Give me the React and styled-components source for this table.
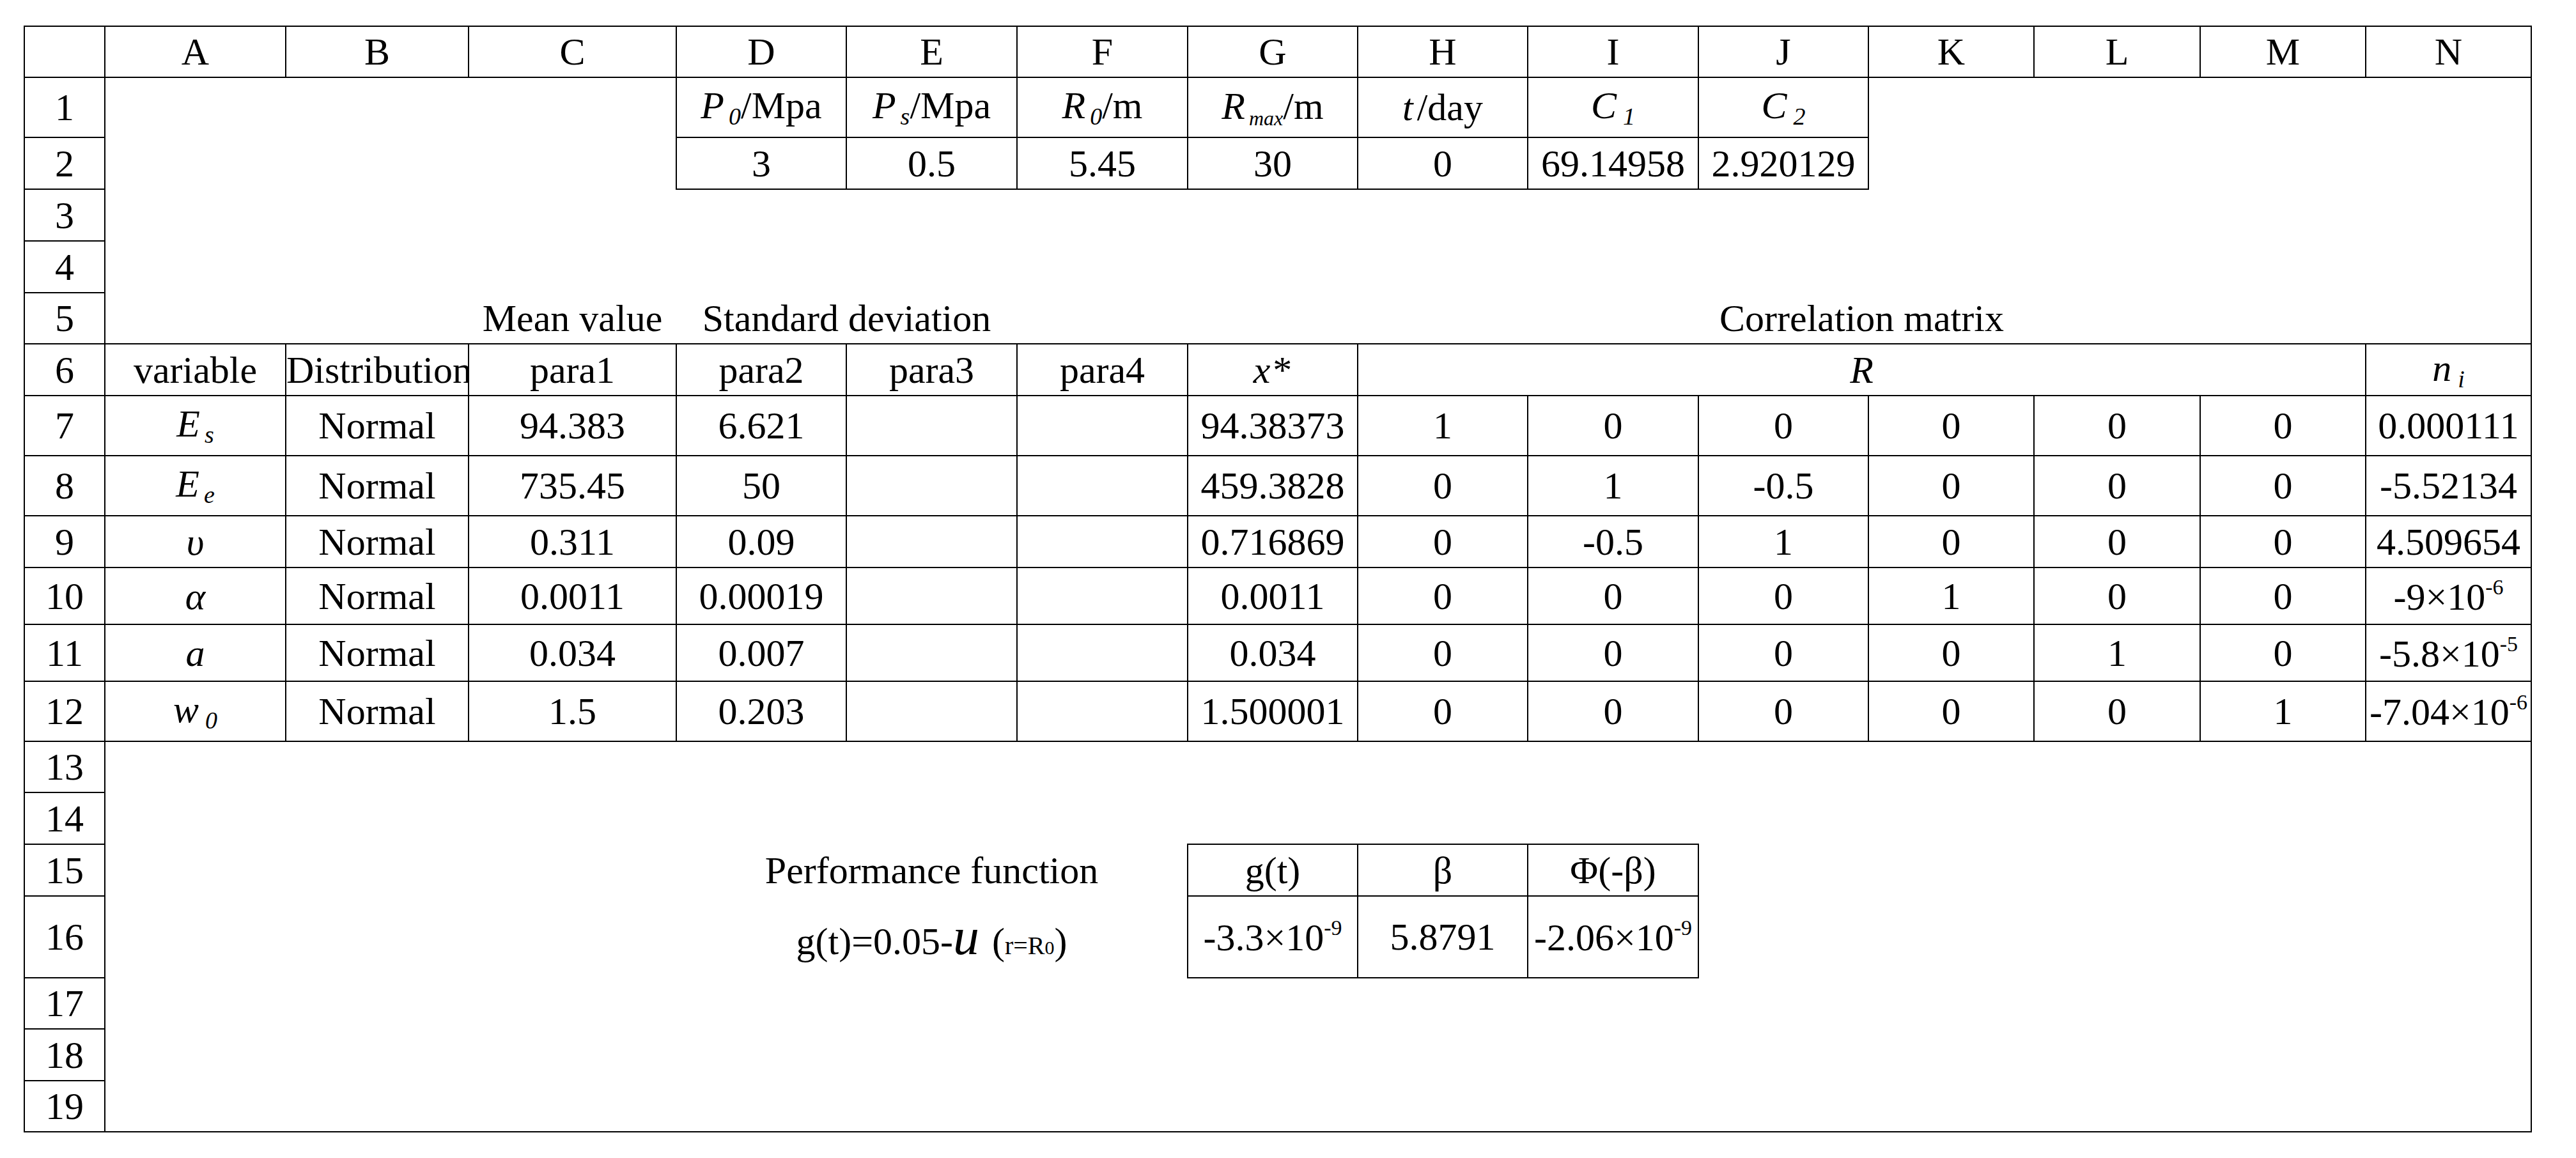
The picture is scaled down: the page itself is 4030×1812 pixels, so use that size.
import React from 'react';
import styled, { createGlobalStyle } from 'styled-components';

const Global = createGlobalStyle`
  html, body { margin: 0; padding: 0; background: #ffffff; }
  body { width: 4030px; height: 1812px; overflow: hidden; }
`;

const Page = styled.div`
  box-sizing: border-box;
  width: 4030px;
  height: 1812px;
  padding: 40px 0 0 37px;
  background: #ffffff;
`;

const Sheet = styled.table`
  border-collapse: collapse;
  table-layout: fixed;
  width: 3922px;
  border: 2px solid #000;
  font-family: "Liberation Serif", "Times New Roman", serif;
  font-size: 60px;
  line-height: 1;
  color: #000;
`;

const Col = styled.col`
  width: ${(p) => p.$w}px;
`;

const Row = styled.tr`
  height: ${(p) => p.$h}px;
`;

const Cell = styled.td`
  padding: 0;
  border: ${(p) => (p.$b ? '2px solid #000' : 'none')};
  text-align: center;
  vertical-align: middle;
  white-space: nowrap;
  overflow: ${(p) => (p.$clip ? 'hidden' : 'visible')};
`;

const It = styled.span`
  font-style: italic;
`;

const Sub = styled.span`
  font-style: italic;
  font-size: ${(p) => p.$size || 38}px;
  vertical-align: -10px;
  margin-left: ${(p) => (p.$gap === undefined ? 7 : p.$gap)}px;
`;

const Sup = styled.span`
  font-size: 34px;
  vertical-align: 24px;
`;

const Gap = styled.span`
  display: inline-block;
  width: ${(p) => p.$w}px;
`;

const BigU = styled.span`
  font-style: italic;
  font-size: 82px;
`;

const Paren = styled.span`
  font-size: 60px;
`;

const Small = styled.span`
  font-size: 40px;
`;

const Tiny = styled.span`
  font-size: 30px;
`;

const COLS = [126, 283, 286, 325, 266, 267, 267, 266, 266, 267, 266, 259, 260, 259, 259];
const LETTERS = ['A', 'B', 'C', 'D', 'E', 'F', 'G', 'H', 'I', 'J', 'K', 'L', 'M', 'N'];
const HEIGHTS = [94, 81, 81, 81, 80, 81, 94, 94, 81, 89, 89, 94, 80, 81, 81, 128, 80, 81, 80];

const E = () => ({ c: null });
const empties = (n) => Array.from({ length: n }, E);
const B = (c, extra = {}) => ({ c, b: true, ...extra });

const exp = (base, power) => (
  <>
    {base}
    <Sup>{power}</Sup>
  </>
);

const dataRow = (variable, mean, sd, x, r, n) => [
  B(variable),
  B('Normal'),
  B(mean),
  B(sd),
  B(''),
  B(''),
  B(x),
  ...r.map((v) => B(v)),
  B(n),
];

const ROWS = [
  // 1
  [
    ...empties(3),
    B(<><It>P</It><Sub>0</Sub>/Mpa</>),
    B(<><It>P</It><Sub>s</Sub>/Mpa</>),
    B(<><It>R</It><Sub>0</Sub>/m</>),
    B(<><It>R</It><Sub $size={32} $gap={6}>max</Sub>/m</>),
    B(<><It>t</It><Gap $w={6} />/day</>),
    B(<><It>C</It><Sub $gap={10}>1</Sub></>),
    B(<><It>C</It><Sub $gap={10}>2</Sub></>),
    ...empties(4),
  ],
  // 2
  [...empties(3), B('3'), B('0.5'), B('5.45'), B('30'), B('0'), B('69.14958'), B('2.920129'), ...empties(4)],
  // 3
  empties(14),
  // 4
  empties(14),
  // 5
  [
    ...empties(2),
    { c: 'Mean value' },
    { c: 'Standard deviation', span: 2 },
    ...empties(2),
    { c: 'Correlation matrix', span: 6 },
    ...empties(1),
  ],
  // 6
  [
    B('variable'),
    B('Distribution', { clip: true }),
    B('para1'),
    B('para2'),
    B('para3'),
    B('para4'),
    B(<><It>x</It><Gap $w={4} />*</>),
    B(<It>R</It>, { span: 6 }),
    B(<><It>n</It><Sub $gap={10}>i</Sub></>),
  ],
  // 7-12
  dataRow(<><It>E</It><Sub>s</Sub></>, '94.383', '6.621', '94.38373', ['1', '0', '0', '0', '0', '0'], '0.000111'),
  dataRow(<><It>E</It><Sub>e</Sub></>, '735.45', '50', '459.3828', ['0', '1', '-0.5', '0', '0', '0'], '-5.52134'),
  dataRow(<It>υ</It>, '0.311', '0.09', '0.716869', ['0', '-0.5', '1', '0', '0', '0'], '4.509654'),
  dataRow(<It>α</It>, '0.0011', '0.00019', '0.0011', ['0', '0', '0', '1', '0', '0'], exp('-9×10', '-6')),
  dataRow(<It>a</It>, '0.034', '0.007', '0.034', ['0', '0', '0', '0', '1', '0'], exp('-5.8×10', '-5')),
  dataRow(<><It>w</It><Sub $gap={10}>0</Sub></>, '1.5', '0.203', '1.500001', ['0', '0', '0', '0', '0', '1'], exp('-7.04×10', '-6')),
  // 13
  empties(14),
  // 14
  empties(14),
  // 15
  [
    ...empties(3),
    { c: 'Performance function', span: 3 },
    B('g(t)'),
    B('β'),
    B('Φ(-β)'),
    ...empties(5),
  ],
  // 16
  [
    ...empties(3),
    {
      c: (
        <>
          g(t)=0.05-<BigU>u</BigU>
          <Gap $w={20} />
          <Paren>(</Paren>
          <Small>r=R</Small>
          <Tiny>0</Tiny>
          <Paren>)</Paren>
        </>
      ),
      span: 3,
    },
    B(exp('-3.3×10', '-9')),
    B('5.8791'),
    B(exp('-2.06×10', '-9')),
    ...empties(5),
  ],
  // 17-19
  empties(14),
  empties(14),
  empties(14),
];

export default function App() {
  return (
    <Page>
      <Global />
      <Sheet>
        <colgroup>
          {COLS.map((w, i) => (
            <Col key={i} $w={w} />
          ))}
        </colgroup>
        <tbody>
          <Row $h={80}>
            <Cell $b />
            {LETTERS.map((l) => (
              <Cell key={l} $b>
                {l}
              </Cell>
            ))}
          </Row>
          {ROWS.map((cells, ri) => (
            <Row key={ri} $h={HEIGHTS[ri]}>
              <Cell $b>{ri + 1}</Cell>
              {cells.map((cell, ci) => (
                <Cell key={ci} $b={cell.b} $clip={cell.clip} colSpan={cell.span || 1}>
                  {cell.c}
                </Cell>
              ))}
            </Row>
          ))}
        </tbody>
      </Sheet>
    </Page>
  );
}
